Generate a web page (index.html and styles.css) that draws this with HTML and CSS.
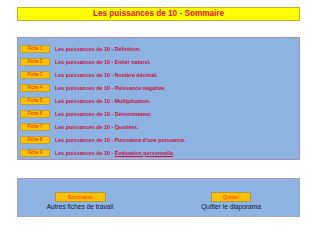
FILE: index.html
```html
<!DOCTYPE html>
<html lang="fr">
<head>
<meta charset="utf-8">
<link rel="stylesheet" href="styles.css">
</head>
<body>
<div class="page">
  <div class="title">Les puissances de 10 - Sommaire</div>
  <div class="panel">
    <div class="row"><span class="fiche">Fiche 1</span><span class="label">Les puissances de 10 - Définition.</span></div>
    <div class="row"><span class="fiche">Fiche 2</span><span class="label">Les puissances de 10 - Entier naturel.</span></div>
    <div class="row"><span class="fiche">Fiche 3</span><span class="label">Les puissances de 10 - Nombre décimal.</span></div>
    <div class="row"><span class="fiche">Fiche 4</span><span class="label">Les puissances de 10 - Puissance négative.</span></div>
    <div class="row"><span class="fiche">Fiche 5</span><span class="label">Les puissances de 10 - Multiplication.</span></div>
    <div class="row"><span class="fiche">Fiche 6</span><span class="label">Les puissances de 10 - Dénominateur.</span></div>
    <div class="row"><span class="fiche">Fiche 7</span><span class="label">Les puissances de 10 - Quotient.</span></div>
    <div class="row"><span class="fiche">Fiche 8</span><span class="label">Les puissances de 10 - Puissance d'une puissance.</span></div>
    <div class="row"><span class="fiche">Fiche 9</span><span class="label">Les puissances de 10 - <u>Évaluation personnelle</u>.</span></div>
  </div>
  <div class="footer">
    <div class="col left">
      <span class="btn wide">Sommaire</span>
      <span class="caption">Autres fiches de travail</span>
    </div>
    <div class="col right">
      <span class="btn narrow">Quitter</span>
      <span class="caption">Quitter le diaporama</span>
    </div>
  </div>
</div>
</body>
</html>
```
FILE: styles.css
```css
html, body {
  margin: 0;
  padding: 0;
  background: #ffffff;
}
.page {
  width: 283px;
  padding: 7px 0 0 17px;
}
.title {
  box-sizing: border-box;
  height: 14px;
  background: #ffff00;
  border: 1px solid #d4a62a;
  color: #e0101a;
  font-family: "Liberation Sans", sans-serif;
  font-weight: bold;
  font-size: 8.2px;
  line-height: 12px;
  text-align: center;
}
.panel {
  box-sizing: border-box;
  margin-top: 16px;
  height: 123px;
  background: #8db3e2;
  border: 1px solid #a590b8;
  padding: 5px 0 0 2px;
  display: flex;
  flex-direction: column;
}
.row {
  display: flex;
  align-items: center;
  height: 13px;
}
.fiche {
  box-sizing: border-box;
  width: 30px;
  height: 8px;
  background: #ffc000;
  border: 1px solid #b6a14a;
  color: #d81b1b;
  font-family: "Liberation Sans", sans-serif;
  font-size: 4.5px;
  line-height: 6px;
  text-align: center;
}
.label {
  margin-left: 5px;
  color: #cc1040;
  font-family: "Liberation Sans", sans-serif;
  font-weight: bold;
  font-size: 5.35px;
  white-space: nowrap;
}
.footer {
  box-sizing: border-box;
  margin-top: 18px;
  height: 39px;
  background: #8db3e2;
  border: 1px solid #a9a0c0;
  display: flex;
  padding-top: 13px;
}
.col {
  display: flex;
  flex-direction: column;
  align-items: center;
}
.left {
  width: 124px;
}
.right {
  margin-left: 51px;
  width: 76px;
}
.btn {
  box-sizing: border-box;
  height: 10px;
  background: #ffc000;
  border: 1px solid #a89a50;
  color: #ff2a00;
  font-family: "Liberation Sans", sans-serif;
  font-size: 5.5px;
  line-height: 8px;
  text-align: center;
}
.wide { width: 51px; }
.narrow { width: 40px; }
.caption {
  margin-top: 1px;
  color: #10183a;
  font-family: "Liberation Sans", sans-serif;
  font-size: 6.6px;
  line-height: 8px;
  white-space: nowrap;
}
```
